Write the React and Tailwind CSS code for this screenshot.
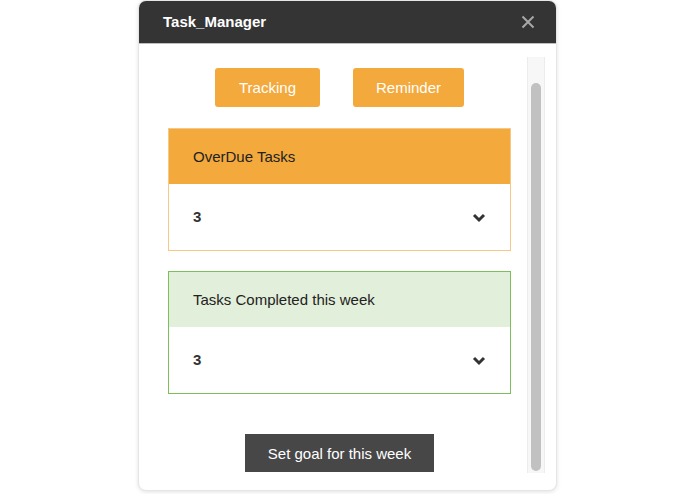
const Chevron = () => (
  <svg width="14" height="10" viewBox="0 0 14 10" className="shrink-0">
    <polyline points="2,2 7,7 12,2" fill="none" stroke="#333" strokeWidth="3" />
  </svg>
);

const StatCard = ({ title, value, headerClass, borderClass }) => (
  <div className={`border ${borderClass}`}>
    <div className={`h-[55px] flex items-center pl-[24px] pt-[2px] text-[15px] text-[#222] ${headerClass}`}>{title}</div>
    <div className="h-[66px] flex items-center justify-between pl-[24px] pr-[24px] pt-[1px] bg-white">
      <span className="text-[15px] font-bold text-[#333]">{value}</span>
      <Chevron />
    </div>
  </div>
);

export default function App() {
  return (
    <div className="w-[695px] h-[494px] bg-white flex justify-center" style={{ fontFamily: '"Liberation Sans", Arial, sans-serif' }}>
      <div className="w-[419px] h-[491px] rounded-[8px] bg-white flex flex-col overflow-hidden border border-[#e6e6e6] shadow-[0_1px_4px_rgba(0,0,0,0.12)]">
        {/* header */}
        <div className="h-[43px] shrink-0 bg-[#343434] border-b border-[#bdbdbd] flex items-center justify-between pl-[24px] pr-[21px]">
          <span className="text-white text-[15px] font-bold">Task_Manager</span>
          <svg width="14" height="14" viewBox="0 0 14 14">
            <path d="M1.5 1.5 L12.5 12.5 M12.5 1.5 L1.5 12.5" stroke="#a8a8a8" strokeWidth="2" />
          </svg>
        </div>

        {/* body */}
        <div className="flex flex-1 min-h-0">
          <div className="flex-1 pl-[29px] pr-[16px] pt-[24px] flex flex-col">
            <div className="flex justify-center gap-[33px]">
              <button className="w-[105px] h-[39px] rounded-[3px] bg-[#f3a93c] text-white text-[15px] pt-[1px]">Tracking</button>
              <button className="w-[111px] h-[39px] rounded-[3px] bg-[#f3a93c] text-white text-[15px] pt-[1px]">Reminder</button>
            </div>
            <div className="mt-[21px]">
              <StatCard title="OverDue Tasks" value="3" headerClass="bg-[#f3a93c]" borderClass="border-[#f5c985]" />
            </div>
            <div className="mt-[20px]">
              <StatCard title="Tasks Completed this week" value="3" headerClass="bg-[#e2efda]" borderClass="border-[#7cbf5c]" />
            </div>
            <div className="flex justify-center mt-[40px]">
              <button className="w-[189px] h-[38px] bg-[#474747] text-white text-[15px] pt-[2px]">Set goal for this week</button>
            </div>
          </div>

          {/* scrollbar */}
          <div className="w-[18px] mr-[11px] mt-[13px] mb-[17px] bg-[#f7f7f7] border-x border-[#ececec] flex flex-col pt-[26px] pb-[2px] items-center">
            <div className="w-[10px] flex-1 rounded-full bg-[#c1c1c1]" />
          </div>
        </div>
      </div>
    </div>
  );
}
